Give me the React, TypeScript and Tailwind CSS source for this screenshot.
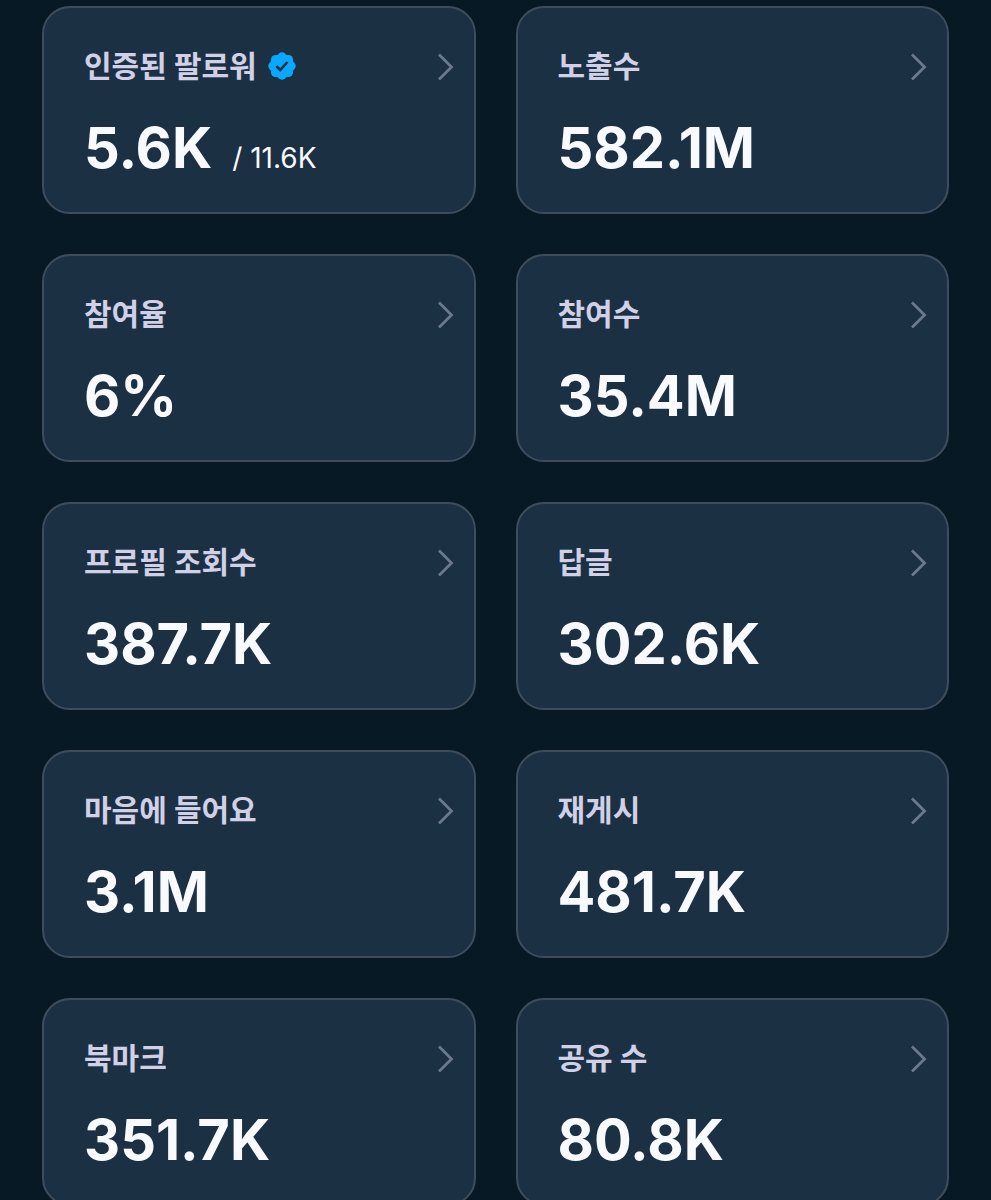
type Metric = {
  label: string
  value: string
  total?: string
  verified?: boolean
}

const metrics: Metric[] = [
  { label: '인증된 팔로워', value: '5.6K', total: '11.6K', verified: true },
  { label: '노출수', value: '582.1M' },
  { label: '참여율', value: '6%' },
  { label: '참여수', value: '35.4M' },
  { label: '프로필 조회수', value: '387.7K' },
  { label: '답글', value: '302.6K' },
  { label: '마음에 들어요', value: '3.1M' },
  { label: '재게시', value: '481.7K' },
  { label: '북마크', value: '351.7K' },
  { label: '공유 수', value: '80.8K' },
]

function VerifiedBadge() {
  return (
    <svg viewBox="0 0 28 28" className="w-7 h-7 shrink-0" role="img" aria-label="인증됨">
      <g fill="#08a8ff">
        <circle cx="14" cy="14" r="12" />
        <circle cx="14" cy="4.9" r="4.6" />
        <circle cx="20.4" cy="7.6" r="4.6" />
        <circle cx="23.1" cy="14" r="4.6" />
        <circle cx="20.4" cy="20.4" r="4.6" />
        <circle cx="14" cy="23.1" r="4.6" />
        <circle cx="7.6" cy="20.4" r="4.6" />
        <circle cx="4.9" cy="14" r="4.6" />
        <circle cx="7.6" cy="7.6" r="4.6" />
      </g>
      <path d="M8.4 14.2l3.8 3.8 7.2-8" fill="none" stroke="#1c3044" strokeWidth="2.6" />
    </svg>
  )
}

function Chevron() {
  return (
    <svg viewBox="0 0 18 28" className="w-[18px] h-7 shrink-0" fill="none" aria-hidden="true">
      <path d="M3 2.5l12.5 12.5L3 27.5" stroke="#6a7890" strokeWidth="2.8" />
    </svg>
  )
}

function MetricCard({ label, value, total, verified }: Metric) {
  return (
    <a
      href="#"
      className="flex flex-col gap-7 h-52 pl-10 pr-5 pt-9 rounded-[28px] border-2 border-[#3e4c5c] bg-[#1c3044]"
    >
      <div className="flex items-center justify-between h-11">
        <div className="flex items-center gap-[11px]">
          <h2 className="text-[30px] leading-[44px] font-bold text-[#d0d0e6]">{label}</h2>
          {verified && <VerifiedBadge />}
        </div>
        <Chevron />
      </div>
      <div className="flex items-baseline gap-5 text-[#f8faff]">
        <span className="text-[56px] leading-[64px] font-bold">{value}</span>
        {total && <span className="text-[28px] leading-8">/ {total}</span>}
      </div>
    </a>
  )
}

export default function App() {
  return (
    <main className="min-h-screen bg-[#081926] px-[42px] pt-[6px] font-['Inter','Noto_Sans_CJK_KR',sans-serif]">
      <div className="grid grid-cols-2 gap-10">
        {metrics.map((metric) => (
          <MetricCard key={metric.label} {...metric} />
        ))}
      </div>
    </main>
  )
}
